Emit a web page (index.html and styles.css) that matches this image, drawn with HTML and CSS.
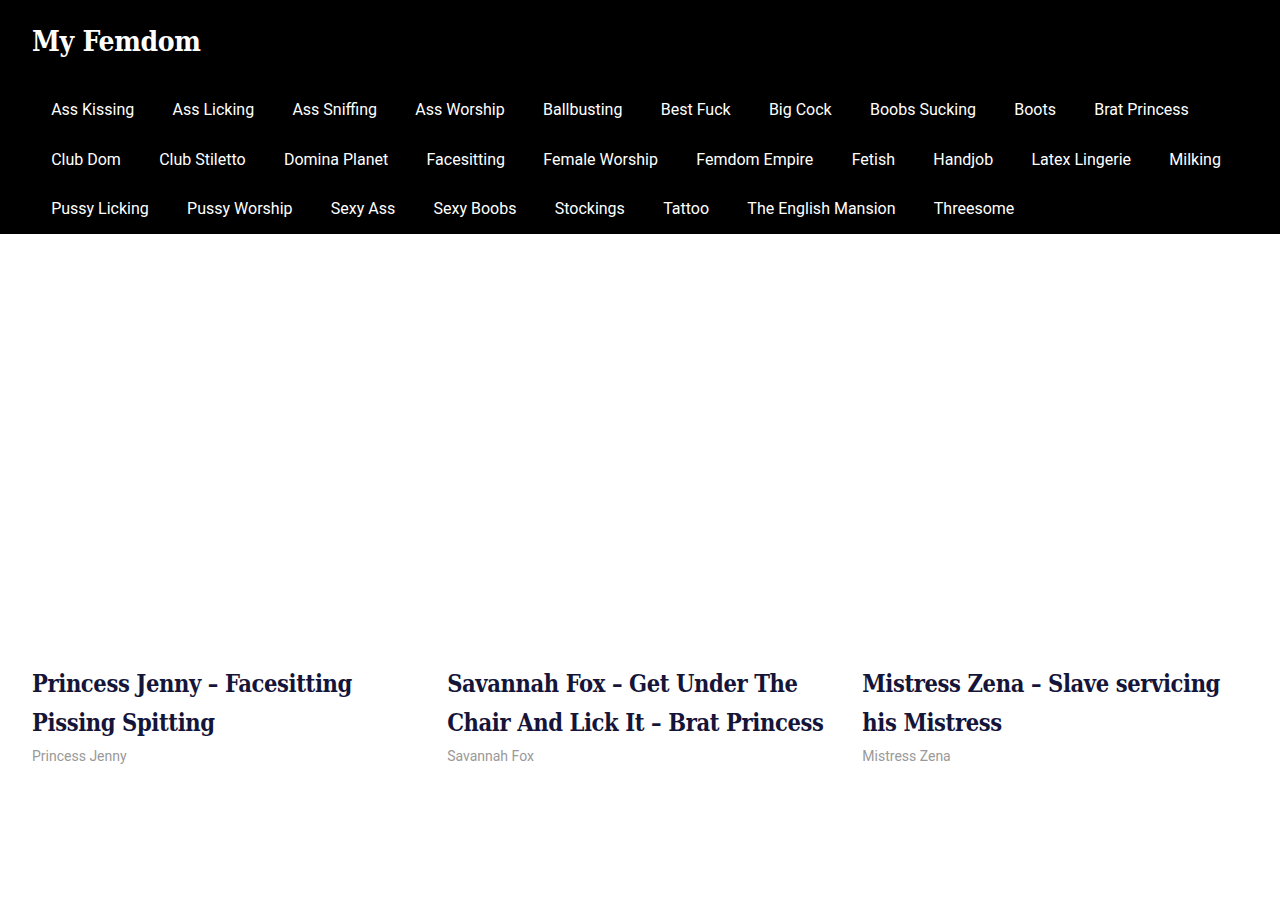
FILE: index.html
```html
<!DOCTYPE html>
<html lang="en">
<head>
<meta charset="UTF-8">
<meta name="viewport" content="width=device-width, initial-scale=1.0">
<title>My Femdom</title>
<link rel="stylesheet" href="styles.css">
</head>
<body>

<header class="site-header">
    <div class="wrap">
        <a class="site-title" href="#">My Femdom</a>
        <nav class="main-nav">
            <a href="#">Ass Kissing</a>
            <a href="#">Ass Licking</a>
            <a href="#">Ass Sniffing</a>
            <a href="#">Ass Worship</a>
            <a href="#">Ballbusting</a>
            <a href="#">Best Fuck</a>
            <a href="#">Big Cock</a>
            <a href="#">Boobs Sucking</a>
            <a href="#">Boots</a>
            <a href="#">Brat Princess</a>
            <a href="#">Club Dom</a>
            <a href="#">Club Stiletto</a>
            <a href="#">Domina Planet</a>
            <a href="#">Facesitting</a>
            <a href="#">Female Worship</a>
            <a href="#">Femdom Empire</a>
            <a href="#">Fetish</a>
            <a href="#">Handjob</a>
            <a href="#">Latex Lingerie</a>
            <a href="#">Milking</a>
            <a href="#">Pussy Licking</a>
            <a href="#">Pussy Worship</a>
            <a href="#">Sexy Ass</a>
            <a href="#">Sexy Boobs</a>
            <a href="#">Stockings</a>
            <a href="#">Tattoo</a>
            <a href="#">The English Mansion</a>
            <a href="#">Threesome</a>
        </nav>
    </div>
</header>

<main class="wrap posts">
    <article class="post">
        <a class="thumb" href="#"></a>
        <h2 class="post-title"><a href="#">Princess Jenny &ndash; Facesitting Pissing Spitting</a></h2>
        <div class="post-meta">Princess Jenny</div>
    </article>
    <article class="post">
        <a class="thumb" href="#"></a>
        <h2 class="post-title"><a href="#">Savannah Fox &ndash; Get Under The Chair And Lick It &ndash; Brat Princess</a></h2>
        <div class="post-meta">Savannah Fox</div>
    </article>
    <article class="post">
        <a class="thumb" href="#"></a>
        <h2 class="post-title"><a href="#">Mistress Zena &ndash; Slave servicing his Mistress</a></h2>
        <div class="post-meta">Mistress Zena</div>
    </article>
</main>

</body>
</html>
```

FILE: styles.css
```css
body {
    font-family: Roboto, "Noto Sans", sans-serif;
    margin: 0;
    padding: 0;
    background-color: #ffffff;
    color: #222;
}
a {
    text-decoration: none;
    color: inherit;
}
.wrap {
    max-width: 1216px;
    margin: 0 auto;
    padding: 0 32px;
}
.site-header {
    background-color: #000;
    color: #fff;
    padding-top: 21px;
}
.site-title {
    display: block;
    font-family: "DejaVu Serif Condensed", "DejaVu Serif", serif;
    font-stretch: condensed;
    font-weight: bold;
    font-size: 28px;
    line-height: 42px;
    letter-spacing: -0.3px;
}
.main-nav {
    display: flex;
    flex-wrap: wrap;
    margin-top: 22px;
}
.main-nav a {
    display: block;
    padding: 12px 19.15px;
    font-size: 16px;
    line-height: 25.5px;
}
.posts {
    display: grid;
    grid-template-columns: repeat(3, 1fr);
    column-gap: 29.5px;
    padding-top: 32px;
    padding-bottom: 60px;
}
.thumb {
    display: block;
    aspect-ratio: 1 / 1;
    background-color: #fff;
}
.post-title {
    font-family: "DejaVu Serif Condensed", "DejaVu Serif", serif;
    font-stretch: condensed;
    font-weight: bold;
    font-size: 23.5px;
    line-height: 39px;
    letter-spacing: -0.4px;
    color: #15153a;
    margin: 14px 0 0;
}
.post-meta {
    margin-top: 3px;
    font-size: 14px;
    line-height: 21px;
    color: #999;
}
```
